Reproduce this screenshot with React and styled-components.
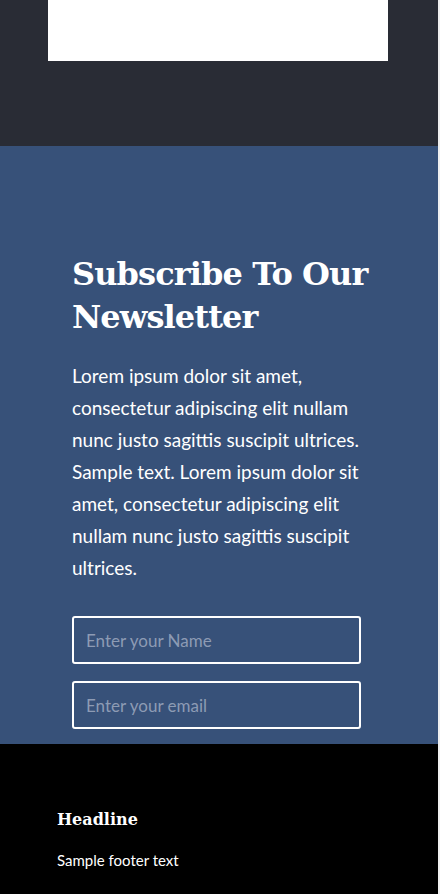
import styled, { createGlobalStyle } from 'styled-components'

const GlobalStyle = createGlobalStyle`
  html, body {
    margin: 0;
    padding: 0;
    background: #f0f0f0;
  }
  * {
    box-sizing: border-box;
  }
`

const Page = styled.div`
  width: 438px;
  font-family: Lato, 'Open Sans', sans-serif;
`

const TopSection = styled.section`
  background-color: #292c35;
  height: 146px;
  padding: 0 50px 0 48px;
`

const MediaBox = styled.div`
  width: 340px;
  height: 61px;
  background-color: #ffffff;
`

const NewsletterSection = styled.section`
  background-color: #375179;
  padding: 107px 58px 15px 72px;
  color: #ffffff;
`

const Title = styled.h2`
  margin: 0 0 21px;
  font-family: 'DejaVu Serif', 'Liberation Serif', serif;
  font-weight: 700;
  font-size: 32px;
  line-height: 43px;
  letter-spacing: -0.9px;
`

const Lead = styled.p`
  margin: 0 0 32px;
  max-width: 300px;
  font-size: 19px;
  line-height: 32px;
  font-weight: 400;
`

const Form = styled.form`
  display: flex;
  flex-direction: column;
  gap: 17px;
`

const Field = styled.input`
  width: 289px;
  height: 48px;
  padding: 0 12px;
  border: 2px solid #ffffff;
  border-radius: 3px;
  background: transparent;
  color: #ffffff;
  font-family: Lato, 'Open Sans', sans-serif;
  font-size: 17px;
  outline: none;
  &::placeholder {
    color: #8d9bb4;
  }
`

const Footer = styled.footer`
  background-color: #000000;
  height: 150px;
  padding: 64px 57px 0;
  color: #ffffff;
`

const FooterTitle = styled.h4`
  margin: 0 0 18px;
  font-family: 'DejaVu Serif', 'Liberation Serif', serif;
  font-weight: 700;
  font-size: 16px;
  line-height: 24px;
`

const FooterText = styled.p`
  margin: 0;
  font-size: 15px;
  line-height: 20px;
`

export default function App() {
  return (
    <Page>
      <GlobalStyle />
      <TopSection>
        <MediaBox />
      </TopSection>
      <NewsletterSection>
        <Title>Subscribe To Our Newsletter</Title>
        <Lead>
          Lorem ipsum dolor sit amet, consectetur adipiscing elit nullam nunc justo sagittis suscipit
          ultrices. Sample text. Lorem ipsum dolor sit amet, consectetur adipiscing elit nullam nunc
          justo sagittis suscipit ultrices.
        </Lead>
        <Form onSubmit={(e) => e.preventDefault()}>
          <Field type="text" placeholder="Enter your Name" />
          <Field type="email" placeholder="Enter your email" />
        </Form>
      </NewsletterSection>
      <Footer>
        <FooterTitle>Headline</FooterTitle>
        <FooterText>Sample footer text</FooterText>
      </Footer>
    </Page>
  )
}
